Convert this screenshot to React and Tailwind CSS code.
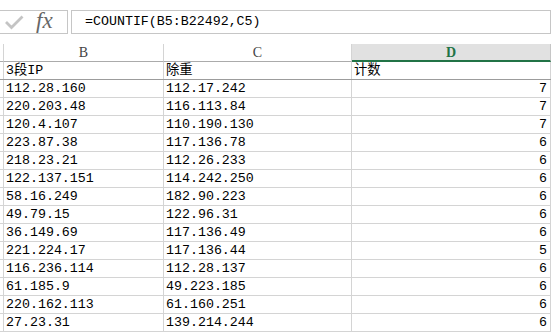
import React from "react";

const rows = [
  ["112.28.160", "112.17.242", "7"],
  ["220.203.48", "116.113.84", "7"],
  ["120.4.107", "110.190.130", "7"],
  ["223.87.38", "117.136.78", "6"],
  ["218.23.21", "112.26.233", "6"],
  ["122.137.151", "114.242.250", "6"],
  ["58.16.249", "182.90.223", "6"],
  ["49.79.15", "122.96.31", "6"],
  ["36.149.69", "117.136.49", "6"],
  ["221.224.17", "117.136.44", "5"],
  ["116.236.114", "112.28.137", "6"],
  ["61.185.9", "49.223.185", "6"],
  ["220.162.113", "61.160.251", "6"],
  ["27.23.31", "139.214.244", "6"],
];

const mono = "font-['Liberation_Mono','Noto_Sans_CJK_SC',monospace]";

function Row({ cells }) {
  return (
    <div className={`flex h-[18px] border-b border-b-[#d4d4d4] text-[13.3px] leading-[18px] text-black ${mono}`}>
      <div className="w-[4px] shrink-0 border-r border-[#d4d4d4]" />
      <div className="w-[160px] shrink-0 border-r border-[#d4d4d4] pl-[2px] whitespace-nowrap overflow-hidden">{cells[0]}</div>
      <div className="w-[188px] shrink-0 border-r border-[#d4d4d4] pl-[2px] whitespace-nowrap overflow-hidden">{cells[1]}</div>
      <div className="w-[199px] shrink-0 border-r border-[#d4d4d4] pr-[3px] text-right">{cells[2]}</div>
    </div>
  );
}

export default function App() {
  return (
    <div className="w-[551px] h-[334px] overflow-hidden bg-white">
      {/* formula bar */}
      <div className="pt-[10px] h-[44px]">
        <div className="flex h-[24px]">
          <div className="w-[68px] shrink-0 border-y border-r border-[#c6c6c6] flex items-center">
            <svg width="20" height="16" viewBox="0 0 20 16" className="ml-[4px]">
              <path d="M2 8 L7.5 13.5 L18.5 2.5" fill="none" stroke="#c4c4c4" strokeWidth="2.8" />
            </svg>
            <span className="ml-[12px] font-['Liberation_Serif',serif] italic text-[23px] leading-none text-[#666] -mt-[3px]">fx</span>
          </div>
          <div className="w-[3px] shrink-0" />
          <div className={`flex-1 border border-[#c6c6c6] flex items-center pl-[13px] text-[13.3px] text-black ${mono}`}>
            =COUNTIF(B5:B22492,C5)
          </div>
        </div>
      </div>
      {/* column headers */}
      <div className="flex h-[18px] font-['Liberation_Serif',serif] text-[14px] leading-[18px] text-[#444]">
        <div className="w-[4px] shrink-0 border-r border-b border-[#ababab] border-r-[#d4d4d4]" />
        <div className="w-[160px] shrink-0 border-r border-r-[#d4d4d4] border-b border-b-[#ababab] text-center">B</div>
        <div className="w-[188px] shrink-0 border-r border-r-[#d4d4d4] border-b border-b-[#ababab] text-center">C</div>
        <div className="w-[199px] shrink-0 bg-[#e1e1e1] border-r border-r-[#c6c6c6] border-b-2 border-b-[#217346] text-center font-bold text-[#217346] leading-[18px]">D</div>
      </div>
      <div className={`flex h-[18px] border-b border-b-[#9c9c9c] text-[13.3px] leading-[18px] text-black ${mono}`}>
        <div className="w-[4px] shrink-0 border-r border-[#d4d4d4]" />
        <div className="w-[160px] shrink-0 border-r border-[#d4d4d4] pl-[2px]">3段IP</div>
        <div className="w-[188px] shrink-0 border-r border-[#d4d4d4] pl-[2px]">除重</div>
        <div className="w-[199px] shrink-0 border-r border-[#d4d4d4] pl-[2px]">计数</div>
      </div>
      {rows.map((r, i) => (
        <Row key={i} cells={r} />
      ))}
    </div>
  );
}
